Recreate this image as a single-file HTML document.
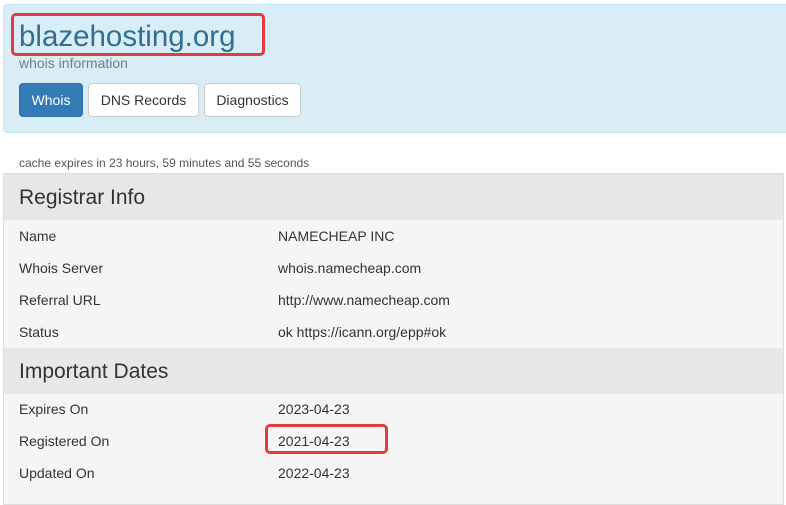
<!DOCTYPE html>
<html><head><style>
body{margin:0;width:786px;height:489px;overflow:hidden;background:#fff;font-family:"Liberation Sans",sans-serif;color:#333;position:relative}
.hdr{position:absolute;left:3px;top:4px;width:800px;height:127px;background:#d9edf7;border:1px solid #bce8f1;border-radius:4px}
.title{position:absolute;left:19px;top:18px;font-size:29.5px;color:#31708f;line-height:38px}
.rb{position:absolute;border:3px solid #e23b3f;border-radius:5px;box-sizing:border-box}
.sub{position:absolute;left:19px;top:55px;font-size:14px;color:#6f7f88}
.btn{position:absolute;top:83px;height:34px;box-sizing:border-box;border:1px solid #ccc;border-radius:4px;background:#fff;font-size:14px;line-height:32px;text-align:center;color:#333}
.btn.a{background:#337ab7;border-color:#2e6da4;color:#fff}
.cache{position:absolute;left:19px;top:156px;font-size:12px;color:#555}
.tbl{position:absolute;left:3px;top:173px;width:779px;height:330px;border:1px solid #ddd;background:#f5f5f5}
.sec{position:absolute;left:0;width:779px;height:46px;background:#e6e7e6;font-size:21px;line-height:47px;text-indent:15px}
.r{position:absolute;font-size:14px}
</style></head><body>
<div class="hdr"></div>
<div class="title">blazehosting.org</div>
<div class="rb" style="left:11px;top:13px;width:254px;height:43px"></div>
<div class="sub">whois information</div>
<div class="btn a" style="left:19px;width:64px">Whois</div>
<div class="btn" style="left:88px;width:111px">DNS Records</div>
<div class="btn" style="left:204px;width:97px">Diagnostics</div>
<div class="cache">cache expires in 23 hours, 59 minutes and 55 seconds</div>
<div class="tbl">
<div class="sec" style="top:0">Registrar Info</div>
<div class="sec" style="top:174px">Important Dates</div>
</div>
<div class="r" style="left:19px;top:228px">Name</div><div class="r" style="left:278px;top:228px">NAMECHEAP INC</div>
<div class="r" style="left:19px;top:260px">Whois Server</div><div class="r" style="left:278px;top:260px">whois.namecheap.com</div>
<div class="r" style="left:19px;top:292px">Referral URL</div><div class="r" style="left:278px;top:292px">http://www.namecheap.com</div>
<div class="r" style="left:19px;top:324px">Status</div><div class="r" style="left:278px;top:324px">ok https://icann.org/epp#ok</div>
<div class="r" style="left:19px;top:401px">Expires On</div><div class="r" style="left:278px;top:401px">2023-04-23</div>
<div class="r" style="left:19px;top:433px">Registered On</div><div class="r" style="left:278px;top:433px">2021-04-23</div>
<div class="r" style="left:19px;top:465px">Updated On</div><div class="r" style="left:278px;top:465px">2022-04-23</div>
<div class="rb" style="left:265px;top:424px;width:123px;height:30px"></div>
</body></html>
